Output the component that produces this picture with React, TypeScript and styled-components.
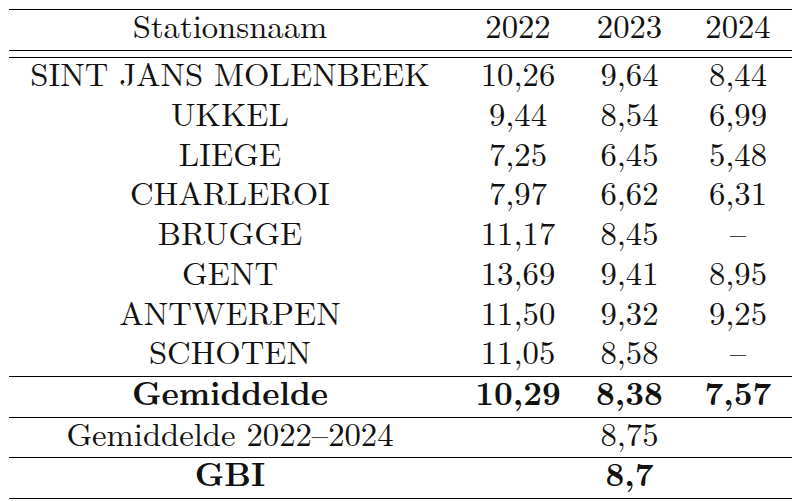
import React from "react";
import styled, { createGlobalStyle } from "styled-components";

const Global = createGlobalStyle`
  html, body { margin: 0; padding: 0; background: #ffffff; }
  body { font-family: 'Latin Modern Roman', 'Liberation Serif', serif; color: #111; }
`;

const Table = styled.div`
  margin: 9px 0 0 9px;
  width: 783px;
  display: flex;
  flex-direction: column;
  border-top: 1px solid #000;
  border-bottom: 1px solid #000;
`;

const Row = styled.div<{ $h: number; $rule?: boolean }>`
  display: grid;
  grid-template-columns: 442px 134px 99px 108px;
  height: ${(p) => p.$h}px;
  border-top: ${(p) => (p.$rule ? "1px solid #000" : "none")};
`;

const DoubleRule = styled.div`
  height: 6px;
  border-top: 1px solid #000;
  border-bottom: 1px solid #000;
`;

const Cell = styled.div<{ $bold?: boolean; $col: number }>`
  font-family: 'Latin Modern Roman', 'Liberation Serif', serif;
  font-size: 32.7px;
  line-height: 29px;
  text-align: center;
  white-space: nowrap;
  font-weight: ${(p) => (p.$bold ? 700 : 400)};
  padding-right: ${(p) => (p.$col === 2 ? 10 : 0)}px;
`;

type Line = [string, string, string, string];

const stations: Line[] = [
  ["SINT JANS MOLENBEEK", "10,26", "9,64", "8,44"],
  ["UKKEL", "9,44", "8,54", "6,99"],
  ["LIEGE", "7,25", "6,45", "5,48"],
  ["CHARLEROI", "7,97", "6,62", "6,31"],
  ["BRUGGE", "11,17", "8,45", "–"],
  ["GENT", "13,69", "9,41", "8,95"],
  ["ANTWERPEN", "11,50", "9,32", "9,25"],
  ["SCHOTEN", "11,05", "8,58", "–"],
];

export default function App() {
  return (
    <>
      <Global />
      <Table>
        <Row $h={40}>
          <Cell $col={0}>Stationsnaam</Cell>
          <Cell $col={1}>2022</Cell>
          <Cell $col={2}>2023</Cell>
          <Cell $col={3}>2024</Cell>
        </Row>
        <DoubleRule />
        {stations.map((s) => (
          <Row key={s[0]} $h={39.75}>
            <Cell $col={0}>{s[0]}</Cell>
            <Cell $col={1}>{s[1]}</Cell>
            <Cell $col={2}>{s[2]}</Cell>
            <Cell $col={3}>{s[3]}</Cell>
          </Row>
        ))}
        <Row $h={40} $rule>
          <Cell $col={0} $bold>Gemiddelde</Cell>
          <Cell $col={1} $bold>10,29</Cell>
          <Cell $col={2} $bold>8,38</Cell>
          <Cell $col={3} $bold>7,57</Cell>
        </Row>
        <Row $h={39} $rule>
          <Cell $col={0}>Gemiddelde 2022–2024</Cell>
          <Cell $col={1} />
          <Cell $col={2}>8,75</Cell>
          <Cell $col={3} />
        </Row>
        <Row $h={40} $rule>
          <Cell $col={0} $bold>GBI</Cell>
          <Cell $col={1} />
          <Cell $col={2} $bold>8,7</Cell>
          <Cell $col={3} />
        </Row>
      </Table>
    </>
  );
}
